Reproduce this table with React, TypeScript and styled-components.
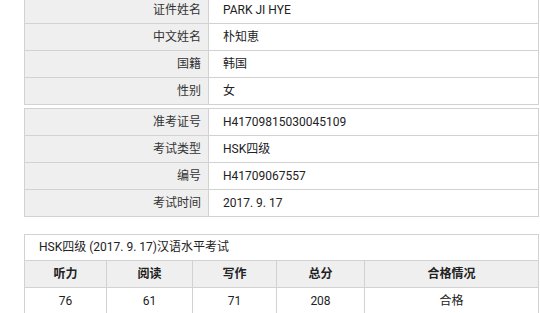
import React from "react";
import styled, { createGlobalStyle } from "styled-components";

const GlobalStyle = createGlobalStyle`
  html, body {
    margin: 0;
    padding: 0;
    background: #ffffff;
  }
  body {
    font-family: Roboto, "Noto Sans CJK SC", sans-serif;
    font-size: 12px;
    color: #333333;
  }
`;

const Page = styled.div`
  width: 515px;
  margin: -4px 0 0 24px;
`;

const InfoTable = styled.div<{ $gap?: number }>`
  display: grid;
  grid-template-columns: 184px 1fr;
  border: 1px solid #d2d2d2;
  border-bottom: none;
  margin-top: ${(p) => p.$gap ?? 0}px;
`;

const Label = styled.div`
  height: 26px;
  line-height: 26px;
  background: #efefef;
  text-align: right;
  padding-right: 7px;
  border-right: 1px solid #d2d2d2;
  border-bottom: 1px solid #d2d2d2;
`;

const Value = styled.div`
  height: 26px;
  line-height: 26px;
  padding-left: 14px;
  color: #222222;
  border-bottom: 1px solid #d2d2d2;
`;

const ScoreTable = styled.div`
  margin-top: 17px;
  border: 1px solid #d2d2d2;
  border-bottom: none;
`;

const Caption = styled.div`
  height: 25px;
  line-height: 25px;
  padding-left: 14px;
  border-bottom: 1px solid #d2d2d2;
  color: #222222;
`;

const ScoreRow = styled.div<{ $head?: boolean }>`
  display: grid;
  grid-template-columns: 82px 86px 84px 88px 1fr;
  background: ${(p) => (p.$head ? "#efefef" : "#ffffff")};
  font-weight: ${(p) => (p.$head ? 700 : 400)};
  border-bottom: 1px solid #d2d2d2;
`;

const ScoreCell = styled.div`
  height: 26px;
  line-height: 26px;
  text-align: center;
  color: #222222;
  border-right: 1px solid #d2d2d2;
  &:last-child {
    border-right: none;
  }
`;

const person = [
  ["证件姓名", "PARK JI HYE"],
  ["中文姓名", "朴知恵"],
  ["国籍", "韩国"],
  ["性别", "女"],
];

const exam = [
  ["准考证号", "H41709815030045109"],
  ["考试类型", "HSK四级"],
  ["编号", "H41709067557"],
  ["考试时间", "2017. 9. 17"],
];

const heads = ["听力", "阅读", "写作", "总分", "合格情况"];
const scores = ["76", "61", "71", "208", "合格"];

const App = () => {
  return (
    <>
      <GlobalStyle />
      <Page>
        <InfoTable>
          {person.map(([k, v]) => (
            <React.Fragment key={k}>
              <Label>{k}</Label>
              <Value>{v}</Value>
            </React.Fragment>
          ))}
        </InfoTable>

        <InfoTable $gap={3}>
          {exam.map(([k, v]) => (
            <React.Fragment key={k}>
              <Label>{k}</Label>
              <Value>{v}</Value>
            </React.Fragment>
          ))}
        </InfoTable>

        <ScoreTable>
          <Caption>HSK四级 (2017. 9. 17)汉语水平考试</Caption>
          <ScoreRow $head>
            {heads.map((h) => (
              <ScoreCell key={h}>{h}</ScoreCell>
            ))}
          </ScoreRow>
          <ScoreRow>
            {scores.map((s, i) => (
              <ScoreCell key={i}>{s}</ScoreCell>
            ))}
          </ScoreRow>
        </ScoreTable>
      </Page>
    </>
  );
};

export default App;
